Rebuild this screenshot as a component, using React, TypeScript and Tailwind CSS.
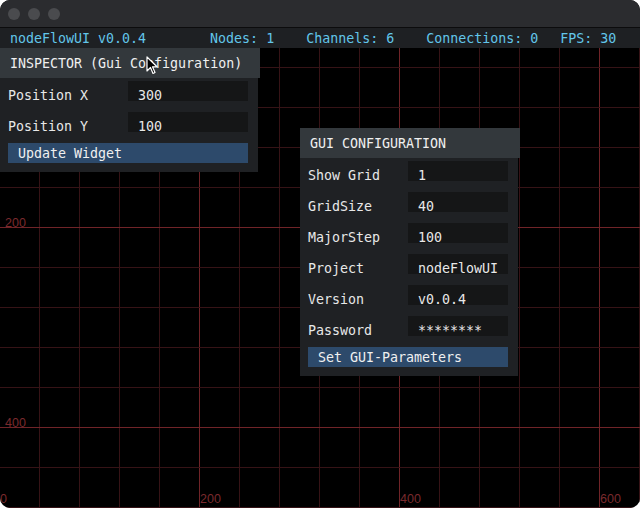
const mono = { fontFamily: '"DejaVu Sans Mono", "Liberation Mono", monospace' };

const minorX = Array.from({ length: 16 }, (_, i) => 39 + i * 40);
const minorY = Array.from({ length: 12 }, (_, i) => 19 + i * 40);

function Grid() {
  return (
    <svg className="absolute inset-0" width={640} height={460}>
      {minorX.map((x) => (
        <line key={`v${x}`} x1={x + 0.5} y1={0} x2={x + 0.5} y2={460} stroke={(x + 1) % 200 === 0 ? '#702428' : '#361316'} strokeWidth={1} />
      ))}
      {minorY.map((y) => (
        <line key={`h${y}`} x1={0} y1={y + 0.5} x2={640} y2={y + 0.5} stroke={(y - 179) % 200 === 0 ? '#702428' : '#361316'} strokeWidth={1} />
      ))}
      <g fill="#7a2a2d" fontFamily='"Liberation Sans", Arial, sans-serif' fontSize={12.5}>
        <text x={5} y={179}>200</text>
        <text x={5} y={379}>400</text>
        <text x={0} y={455}>0</text>
        <text x={200} y={455}>200</text>
        <text x={400} y={455}>400</text>
        <text x={600} y={455}>600</text>
      </g>
    </svg>
  );
}

function Field({ label, value, labelW }: { label: string; value: string; labelW: string }) {
  return (
    <div className="flex h-[20px]">
      <span className={`${labelW} leading-[29px] text-[#e8e8e8]`}>{label}</span>
      <span className="flex-1 bg-[#151617] pl-[10px] leading-[29px] text-[#e8e8e8]">{value}</span>
    </div>
  );
}

function Panel({
  title,
  width,
  labelW,
  rows,
  button,
}: {
  title: string;
  width: string;
  labelW: string;
  rows: [string, string][];
  button: string;
}) {
  return (
    <div className="flex flex-col">
      <div className={`h-[30px] ${width} bg-[#33383c] pl-[10px] leading-[32px] text-[#f0f0f0]`}>{title}</div>
      <div className="flex flex-col gap-[11px] bg-[#1f2124] pl-[8px] pr-[10px] pt-[3px] pb-[9px] mr-[2px]">
        {rows.map(([l, v]) => (
          <Field key={l} label={l} value={v} labelW={labelW} />
        ))}
        <div className="h-[20px] bg-[#2d4a6b] pl-[10px] leading-[22px] text-[#f0f0f0]">{button}</div>
      </div>
    </div>
  );
}

export default function App() {
  return (
    <div className="w-[640px] h-[508px] bg-white">
      <div className="w-[640px] h-[508px] rounded-[10px] overflow-hidden bg-black flex flex-col text-[13.3px]" style={mono}>
        {/* title bar */}
        <div className="h-[28px] bg-[#2b2c2f] border-b border-[#0c0c0d] flex items-center gap-[8px] pl-[8px]">
          <span className="w-[12px] h-[12px] rounded-full bg-[#4a4b4e]" />
          <span className="w-[12px] h-[12px] rounded-full bg-[#4a4b4e]" />
          <span className="w-[12px] h-[12px] rounded-full bg-[#4a4b4e]" />
        </div>
        {/* status bar */}
        <div className="h-[20px] bg-[#1e2023] flex items-center pl-[10px] text-[#62c6ea] leading-[21px]">
          <span>nodeFlowUI v0.0.4</span>
          <span className="ml-[64px]">Nodes: 1</span>
          <span className="ml-[32px]">Channels: 6</span>
          <span className="ml-[32px]">Connections: 0</span>
          <span className="ml-[22px]">FPS: 30</span>
        </div>
        {/* canvas */}
        <div className="relative flex-1">
          <Grid />
          <div className="absolute left-0 top-0">
            <Panel
              title="INSPECTOR (Gui Configuration)"
              width="w-[260px]"
              labelW="w-[120px]"
              rows={[
                ['Position X', '300'],
                ['Position Y', '100'],
              ]}
              button="Update Widget"
            />
          </div>
          <div className="absolute left-[300px] top-[80px]">
            <Panel
              title="GUI CONFIGURATION"
              width="w-[220px]"
              labelW="w-[100px]"
              rows={[
                ['Show Grid', '1'],
                ['GridSize', '40'],
                ['MajorStep', '100'],
                ['Project', 'nodeFlowUI'],
                ['Version', 'v0.0.4'],
                ['Password', '********'],
              ]}
              button="Set GUI-Parameters"
            />
          </div>
          {/* mouse cursor */}
          <svg className="absolute left-[146px] top-[8px]" width={14} height={20} viewBox="0 0 14 20">
            <path d="M1 1 L1 15 L4.5 11.5 L7 17.5 L9 16.5 L6.5 10.8 L11 10.8 Z" fill="#000" stroke="#fff" strokeWidth={1.2} strokeLinejoin="round" />
          </svg>
        </div>
      </div>
    </div>
  );
}
